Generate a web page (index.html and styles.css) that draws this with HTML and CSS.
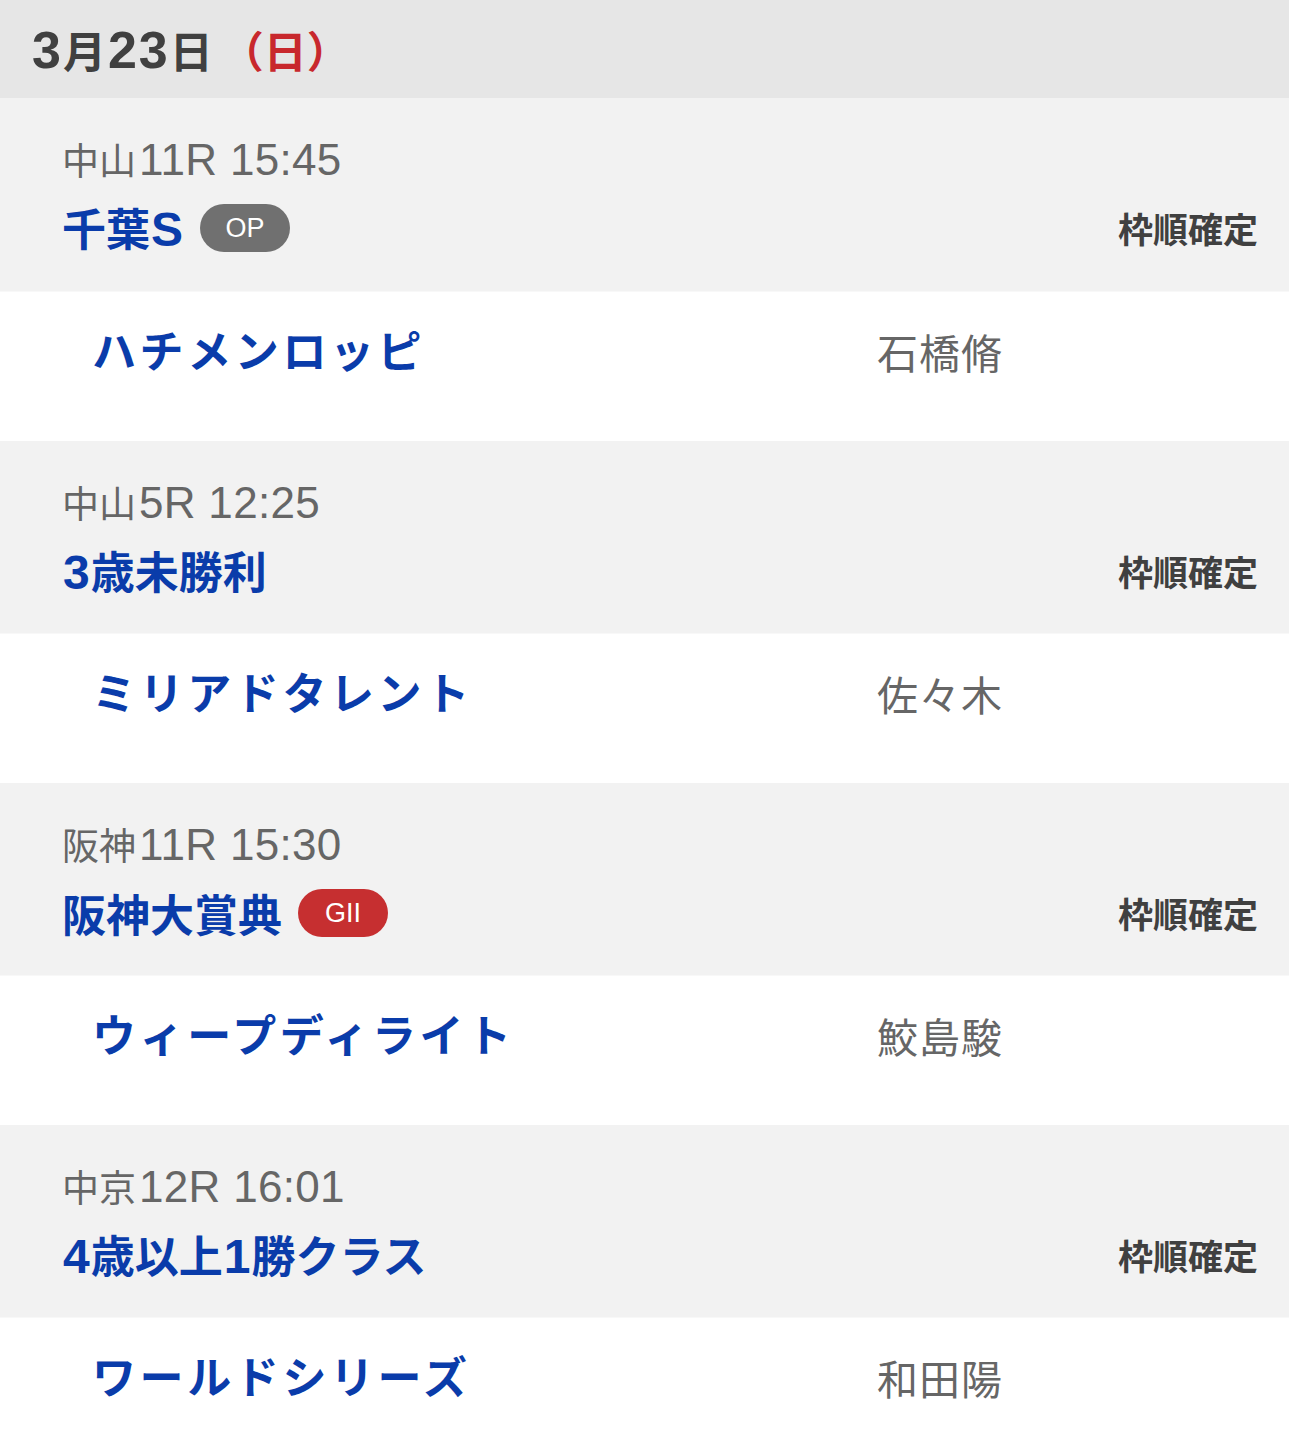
FILE: index.html
```html
<!DOCTYPE html>
<html lang="ja">
<head>
<meta charset="utf-8">
<title>出走予定</title>
<link rel="stylesheet" href="styles.css">
</head>
<body>
<div class="day-head"><span class="date"><span class="lat">3</span>月<span class="lat">23</span>日</span><span class="dow">（日）</span></div>

<section class="race">
  <div class="race-head">
    <div class="race-time">中山<span class="lat">11R 15:45</span></div>
    <div class="race-row">
      <div class="race-name">千葉<span class="lat">S</span><span class="badge badge-op">OP</span></div>
      <div class="race-status">枠順確定</div>
    </div>
  </div>
  <div class="horse-row"><div class="horse">ハチメンロッピ</div><div class="jockey">石橋脩</div></div>
</section>

<section class="race">
  <div class="race-head">
    <div class="race-time">中山<span class="lat">5R 12:25</span></div>
    <div class="race-row">
      <div class="race-name"><span class="lat">3</span>歳未勝利</div>
      <div class="race-status">枠順確定</div>
    </div>
  </div>
  <div class="horse-row"><div class="horse">ミリアドタレント</div><div class="jockey">佐々木</div></div>
</section>

<section class="race">
  <div class="race-head">
    <div class="race-time">阪神<span class="lat">11R 15:30</span></div>
    <div class="race-row">
      <div class="race-name">阪神大賞典<span class="badge badge-g">GII</span></div>
      <div class="race-status">枠順確定</div>
    </div>
  </div>
  <div class="horse-row"><div class="horse">ウィープディライト</div><div class="jockey">鮫島駿</div></div>
</section>

<section class="race">
  <div class="race-head">
    <div class="race-time">中京<span class="lat">12R 16:01</span></div>
    <div class="race-row">
      <div class="race-name"><span class="lat">4</span>歳以上<span class="lat">1</span>勝クラス</div>
      <div class="race-status">枠順確定</div>
    </div>
  </div>
  <div class="horse-row"><div class="horse">ワールドシリーズ</div><div class="jockey">和田陽</div></div>
</section>
</body>
</html>
```
FILE: styles.css
```css
* { box-sizing: border-box; }
html, body { margin: 0; padding: 0; }
body {
  font-family: "Noto Sans CJK JP", "Liberation Sans", sans-serif;
  background: #ffffff;
  width: 1289px;
  overflow: hidden;
}
.lat { font-family: "Liberation Sans", Arial, sans-serif; }

.day-head {
  height: 98px;
  background: #e6e6e6;
  padding-left: 32px;
  display: flex;
  align-items: center;
  font-size: 43px;
  font-weight: 700;
  line-height: 60px;
}
.day-head .lat { font-size: 52px; }
.date { color: #404040; letter-spacing: 2px; }
.dow { color: #c8282d; margin-left: 6px; }

.race-head {
  height: 193px;
  background: #f2f2f2;
  padding: 37px 31px 0 62px;
  display: flex;
  flex-direction: column;
}
.race + .race .race-head { height: 192px; }
.race-time {
  height: 48px;
  line-height: 48px;
  font-size: 37px;
  color: #666666;
  font-weight: 400;
  white-space: nowrap;
}
.race-time .lat { font-size: 44px; margin-left: 3px; letter-spacing: 0.3px; }
.race-row {
  margin-top: 20px;
  height: 50px;
  display: flex;
  align-items: center;
  justify-content: space-between;
}
.race-name {
  display: flex;
  align-items: baseline;
  font-size: 44px;
  font-weight: 700;
  color: #0a3caa;
  line-height: 50px;
}
.race-name .lat { font-size: 48px; margin: 0 1px; }
.badge {
  align-self: center;
  display: inline-flex;
  align-items: center;
  justify-content: center;
  height: 48px;
  width: 90px;
  border-radius: 24px;
  color: #ffffff;
  font-family: "Liberation Sans", Arial, sans-serif;
  font-size: 27px;
  font-weight: 400;
  margin-left: 16px;
}
.badge-op { background: #707070; }
.badge-g { background: #c62f30; }
.race-status {
  font-size: 35px;
  font-weight: 700;
  color: #404040;
  line-height: 50px;
}

.horse-row {
  height: 150px;
  background: #ffffff;
  display: flex;
  align-items: center;
  padding-left: 92px;
  padding-bottom: 36px;
  border-top: 1px solid #f8f8f8;
}
.horse {
  width: 785px;
  font-size: 44px;
  font-weight: 700;
  color: #0a3caa;
  letter-spacing: 3.6px;
  line-height: 50px;
}
.jockey {
  font-size: 41px;
  color: #666666;
  line-height: 50px;
  letter-spacing: 1px;
  margin-top: 4px;
}
```
